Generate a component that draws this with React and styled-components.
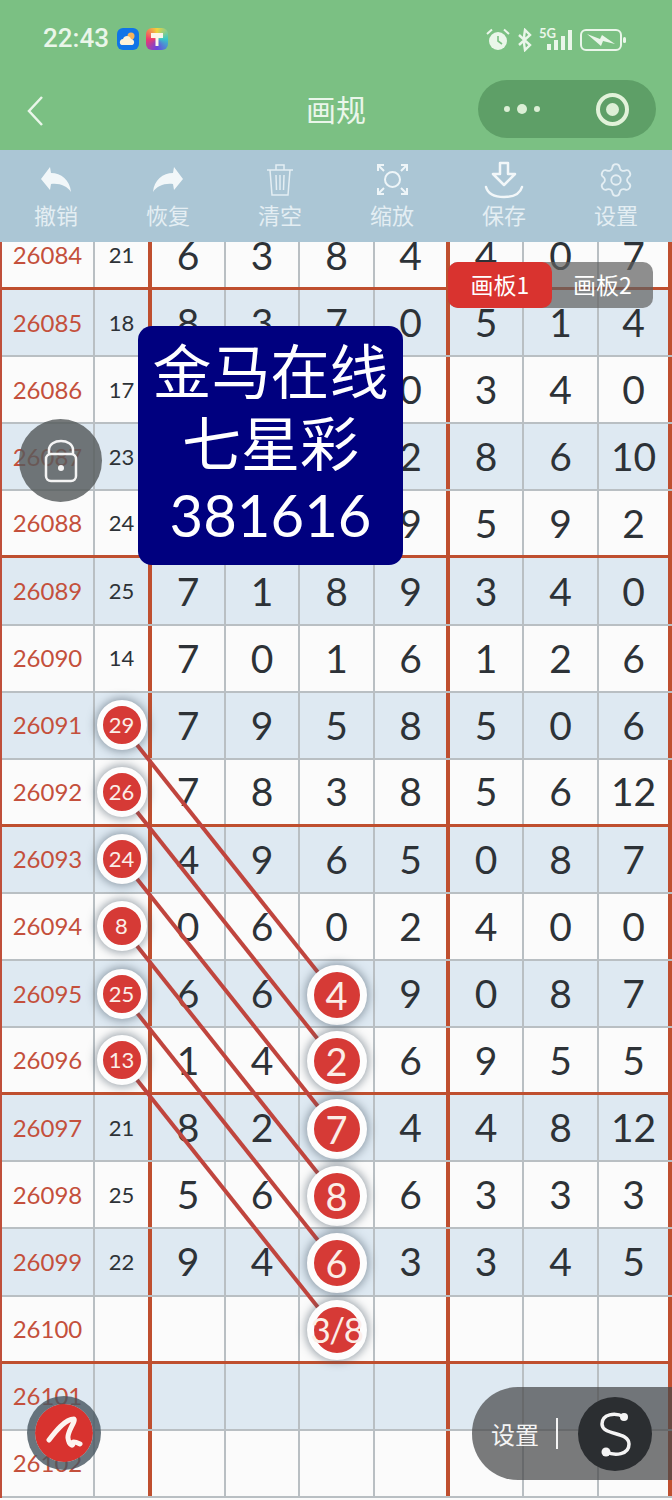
import React from 'react';
import styled, { createGlobalStyle } from 'styled-components';
import { Settings } from 'lucide-react';

const CJK = '"Noto Sans CJK SC", "Noto Sans", sans-serif';
const NUM = 'Lato, "Noto Sans CJK SC", sans-serif';

const Global = createGlobalStyle`
  html, body { margin: 0; padding: 0; background: #fbfbfb; }
  * { box-sizing: border-box; }
`;

const Page = styled.div`
  position: relative;
  width: 672px;
  height: 1500px;
  overflow: hidden;
  display: flex;
  flex-direction: column;
  font-family: ${CJK};
`;

const Head = styled.header`
  height: 150px;
  background: #7bc083;
  flex: none;
  color: #eaf6ea;
`;

const StatusBar = styled.div`
  height: 76px;
  padding: 26px 46px 0 43px;
  display: flex;
  align-items: flex-start;
`;

const Time = styled.span`
  font: 500 26px/24px Roboto, sans-serif;
  margin-right: 8px;
`;

const AppIcon = styled.span`
  width: 22px;
  height: 22px;
  border-radius: 6px;
  margin-right: 7px;
  margin-top: 2px;
  display: flex;
  align-items: center;
  justify-content: center;
  background: ${p => p.$bg};
`;

const StatusRight = styled.div`
  margin-left: auto;
  display: flex;
  align-items: center;
  height: 28px;
`;

const StatusGlyph = styled.svg`
  margin-left: ${p => p.$gap || 0}px;
`;

const FiveG = styled.span`
  font: 700 13px/12px Lato, sans-serif;
  margin: -14px -12px 0 7px;
  width: 18px;
`;

const Nav = styled.div`
  height: 74px;
  position: relative;
  display: flex;
  align-items: center;
  justify-content: center;
  padding-bottom: 10px;
`;

const BackIcon = styled.svg`
  position: absolute;
  left: 26px;
  top: 19px;
`;

const Title = styled.div`
  font-size: 30px;
  line-height: 40px;
`;

const Capsule = styled.div`
  position: absolute;
  left: 478px;
  top: 4px;
  width: 178px;
  height: 58px;
  border-radius: 29px;
  background: #5e9f67;
  display: flex;
  align-items: center;
  padding-left: 26px;
`;

const Dot = styled.span`
  width: ${p => p.$size}px;
  height: ${p => p.$size}px;
  border-radius: 50%;
  background: #dcefd6;
  margin-right: 7px;
`;

const Target = styled.span`
  position: absolute;
  left: 118px;
  top: 13px;
  width: 33px;
  height: 33px;
  border-radius: 50%;
  border: 4px solid #e2f2da;
  display: flex;
  align-items: center;
  justify-content: center;
  &::after {
    content: '';
    width: 13px;
    height: 13px;
    border-radius: 50%;
    background: #dcefd6;
  }
`;

const Toolbar = styled.nav`
  height: 92px;
  flex: none;
  background: #abc6d5;
  display: grid;
  grid-template-columns: repeat(6, 112px);
`;

const Tool = styled.div`
  display: flex;
  flex-direction: column;
  align-items: center;
  color: #e4eef3;
`;

const ToolIcon = styled.div`
  height: 51px;
  display: flex;
  align-items: center;
  justify-content: center;
  padding-top: 8px;
`;

const ToolLabel = styled.span`
  font-size: 22px;
  line-height: 26px;
`;

const Sheet = styled.main`
  flex: 1;
  overflow: hidden;
`;

const Rows = styled.div`
  margin-top: -19px;
  border-left: 2px solid #bf4f3a;
`;

const Row = styled.div`
  display: grid;
  grid-template-columns: 93px 57px 74px 74px 75px 75px 74px 75px 73px;
  height: 67.1px;
  background: ${p => (p.$blue ? '#dee9f2' : '#fbfbfb')};
  border-bottom: ${p => (p.$thick ? '3px solid #bf4f2f' : '2px solid #b9bfc3')};
`;

const Cell = styled.div`
  display: flex;
  align-items: center;
  justify-content: center;
  border-right: ${p => (p.$thick ? '4px solid #bf4f2f' : '2px solid #b9bfc3')};
  color: #2d3237;
  font: 400 39px/1 ${NUM};
`;

const IdCell = styled(Cell)`
  color: #c4503c;
  font-size: 24px;
`;

const CountCell = styled(Cell)`
  font-size: 22px;
`;

const Ball = styled.span`
  position: relative;
  z-index: 2;
  flex: none;
  display: flex;
  align-items: center;
  justify-content: center;
  width: ${p => (p.$big ? 60 : 50)}px;
  height: ${p => (p.$big ? 60 : 50)}px;
  margin-top: ${p => (p.$big ? 2 : 0)}px;
  border-radius: 50%;
  background: #d63a36;
  border: ${p => (p.$big ? 7 : 6)}px solid #fdfdfd;
  box-shadow: 0 0 8px 2px rgba(70, 85, 100, 0.5);
  color: #fbeee8;
  font-size: ${p => (p.$big ? 38 : 22)}px;
  white-space: nowrap;
`;

// "3/8" has to stay inside the red part
const Fraction = styled.span`
  font-size: 35px;
  letter-spacing: -1.5px;
`;

const Lines = styled.svg`
  position: absolute;
  left: 0;
  top: 0;
  z-index: 1;
  pointer-events: none;
`;

const Notice = styled.div`
  position: absolute;
  z-index: 3;
  left: 138px;
  top: 326px;
  width: 265px;
  height: 239px;
  border-radius: 14px;
  background: #00007f;
  color: #fff;
  text-align: center;
  font-size: 59px;
  line-height: 72px;
  padding-top: 7px;
`;

const NoticeNum = styled.div`
  font-family: ${NUM};
  font-size: 58px;
  margin-top: 2px;
`;

const Tabs = styled.div`
  position: absolute;
  z-index: 3;
  left: 448px;
  top: 262px;
  width: 205px;
  height: 46px;
  display: flex;
  border-radius: 10px;
  background: rgba(95, 95, 95, 0.7);
`;

const Tab = styled.div`
  width: ${p => (p.$on ? 104 : 101)}px;
  border-radius: 10px;
  background: ${p => (p.$on ? '#d9332f' : 'transparent')};
  color: #fff;
  font-size: 23px;
  line-height: 44px;
  text-align: center;
`;

const LockButton = styled.div`
  position: absolute;
  z-index: 3;
  left: 19px;
  top: 419px;
  width: 83px;
  height: 83px;
  border-radius: 50%;
  background: rgba(85, 90, 92, 0.82);
  display: flex;
  align-items: center;
  justify-content: center;
`;

const PenButton = styled.div`
  position: absolute;
  z-index: 3;
  left: 27px;
  top: 1396px;
  width: 74px;
  height: 74px;
  border-radius: 50%;
  background: #d8332f;
  border: 8px solid rgba(70, 85, 95, 0.8);
  background-clip: padding-box;
  display: flex;
  align-items: center;
  justify-content: center;
`;

const Dock = styled.div`
  position: absolute;
  z-index: 3;
  left: 472px;
  top: 1387px;
  width: 200px;
  height: 93px;
  border-radius: 46px 0 0 46px;
  background: rgba(70, 72, 74, 0.72);
  display: flex;
  align-items: center;
  padding-left: 19px;
  color: #f4f4f4;
  font-size: 24px;
`;

const DockRule = styled.span`
  width: 2px;
  height: 31px;
  margin-left: 17px;
  background: #f4f4f4;
`;

const DockKnob = styled.span`
  margin-left: 20px;
  width: 74px;
  height: 74px;
  border-radius: 50%;
  background: #2b2e31;
  display: flex;
  align-items: center;
  justify-content: center;
`;

const tools = [
  ['撤销', <svg key="a" width="32" height="27" viewBox="0 0 32 27"><path d="M1 13 L10 1 L11 7 C21 7 30 14 31 26 C27 20 20 17 11 18 L10 24 Z" fill="#f2f7f9" /></svg>],
  ['恢复', <svg key="b" width="32" height="27" viewBox="0 0 32 27"><path d="M31 13 L22 1 L21 7 C11 7 2 14 1 26 C5 20 12 17 21 18 L22 24 Z" fill="#f2f7f9" /></svg>],
  ['清空', <svg key="c" width="28" height="34" viewBox="0 0 28 34" fill="none" stroke="#e4eef3" strokeWidth="1.5"><path d="M1 7 H27 M10 7 V2 H18 V7 M4 7 L6 32 H22 L24 7 M10 12 L10.5 27 M14 12 V27 M18 12 L17.5 27" /></svg>],
  ['缩放', <svg key="d" width="33" height="33" viewBox="0 0 33 33" fill="none" stroke="#eef5f8" strokeWidth="2"><circle cx="16.5" cy="16.5" r="7.5" /><path d="M2 8 V2 H8 M2 2 L8 8 M31 8 V2 H25 M31 2 L25 8 M2 25 V31 H8 M2 31 L8 25 M31 25 V31 H25 M31 31 L25 25" /></svg>],
  ['保存', <svg key="e" width="40" height="38" viewBox="0 0 40 38" fill="none" stroke="#f2f7f9" strokeWidth="2.5" strokeLinejoin="round" strokeLinecap="round"><path d="M16 2 H24 V13 H31 L20 24 L9 13 H16 Z" /><path d="M2 26 C4 33 11 36 20 36 C29 36 36 33 38 26" /></svg>],
  ['设置', <Settings key="f" size={38} strokeWidth={1.15} color="#e4eef3" />],
];

const rows = [
  ['26084', '21', '6', '3', '8', '4', '4', '0', '7'],
  ['26085', '18', '8', '3', '7', '0', '5', '1', '4'],
  ['26086', '17', '', '', '', '0', '3', '4', '0'],
  ['26087', '23', '', '', '', '2', '8', '6', '10'],
  ['26088', '24', '', '', '', '9', '5', '9', '2'],
  ['26089', '25', '7', '1', '8', '9', '3', '4', '0'],
  ['26090', '14', '7', '0', '1', '6', '1', '2', '6'],
  ['26091', '29', '7', '9', '5', '8', '5', '0', '6'],
  ['26092', '26', '7', '8', '3', '8', '5', '6', '12'],
  ['26093', '24', '4', '9', '6', '5', '0', '8', '7'],
  ['26094', '8', '0', '6', '0', '2', '4', '0', '0'],
  ['26095', '25', '6', '6', '4', '9', '0', '8', '7'],
  ['26096', '13', '1', '4', '2', '6', '9', '5', '5'],
  ['26097', '21', '8', '2', '7', '4', '4', '8', '12'],
  ['26098', '25', '5', '6', '8', '6', '3', '3', '3'],
  ['26099', '22', '9', '4', '6', '3', '3', '4', '5'],
  ['26100', '', '', '', '3/8', '', '', '', ''],
  ['26101', '', '', '', '', '', '', '', ''],
  ['26102', '', '', '', '', '', '', '', ''],
];

// rows whose count / third column sit in a ball
const smallBalls = new Set(['26091', '26092', '26093', '26094', '26095', '26096']);
const bigBalls = new Set(['26095', '26096', '26097', '26098', '26099', '26100']);

const links = [726, 793, 860, 927, 994, 1061];

const App = () => (
  <Page>
    <Global />
    <Head>
      <StatusBar>
        <Time>22:43</Time>
        <AppIcon $bg="#0f74e8">
          <svg width="18" height="14" viewBox="0 0 18 14">
            <circle cx="12" cy="4" r="3.5" fill="#f5b35a" />
            <path d="M3 13 C0 13 0 7 4 7 C5 3 11 3 12 7 C16 7 16 13 13 13 Z" fill="#fdf2d8" />
          </svg>
        </AppIcon>
        <AppIcon $bg="conic-gradient(from 0deg, #f2d43a, #37c8c8 25%, #6a45e0 50%, #f03a6c 75%, #f2d43a)">
          <svg width="14" height="16" viewBox="0 0 14 16"><path d="M1 2 H13 V7 H8.5 V15 H5.5 V7 H1 Z" fill="#fdf6ea" /></svg>
        </AppIcon>
        <StatusRight>
          <StatusGlyph width="24" height="24" viewBox="0 0 24 24" fill="#eaf6ea">
            <circle cx="12" cy="13" r="9" />
            <path d="M1 6 L6 1.5 M23 6 L18 1.5" stroke="#eaf6ea" strokeWidth="2" />
            <path d="M12 8 V13 L16 16" stroke="#7bc083" strokeWidth="1.6" fill="none" />
          </StatusGlyph>
          <StatusGlyph $gap={7} width="15" height="24" viewBox="0 0 15 24" fill="none" stroke="#eaf6ea" strokeWidth="2.4">
            <path d="M2 7 L13 17 L8 22 Q6 12 8 2 L13 7 L2 17" />
          </StatusGlyph>
          <FiveG>5G</FiveG>
          <StatusGlyph $gap={1} width="28" height="24" viewBox="0 0 28 24" fill="#eaf6ea">
            <rect x="1" y="16" width="4" height="6" />
            <rect x="8" y="12" width="4" height="10" />
            <rect x="15" y="8" width="4" height="14" />
            <rect x="22" y="2" width="4" height="20" />
          </StatusGlyph>
          <StatusGlyph $gap={6} width="46" height="24" viewBox="0 0 46 24" fill="none">
            <rect x="1" y="2" width="40" height="20" rx="5" stroke="#eaf6ea" strokeWidth="2" />
            <rect x="43" y="9" width="3" height="6" rx="1.5" fill="#eaf6ea" />
            <path d="M7 6 L20 11 L22 7 L35 16 L23 13 L21 18 Z" fill="#eaf6ea" />
          </StatusGlyph>
        </StatusRight>
      </StatusBar>
      <Nav>
        <BackIcon width="20" height="32" viewBox="0 0 20 32" fill="none" stroke="#eaf6ea" strokeWidth="2.5">
          <path d="M16 2 L3 16 L16 30" />
        </BackIcon>
        <Title>画规</Title>
        <Capsule>
          <Dot $size={6} />
          <Dot $size={10} />
          <Dot $size={6} />
          <Target />
        </Capsule>
      </Nav>
    </Head>

    <Toolbar>
      {tools.map(([label, icon]) => (
        <Tool key={label}>
          <ToolIcon>{icon}</ToolIcon>
          <ToolLabel>{label}</ToolLabel>
        </Tool>
      ))}
    </Toolbar>

    <Sheet>
      <Rows>
        {rows.map((r, i) => (
          <Row key={r[0]} $blue={i % 2 === 1} $thick={i % 4 === 0}>
            <IdCell>{r[0]}</IdCell>
            <CountCell $thick>
              {smallBalls.has(r[0]) ? <Ball>{r[1]}</Ball> : r[1]}
            </CountCell>
            <Cell>{r[2]}</Cell>
            <Cell>{r[3]}</Cell>
            <Cell>
              {bigBalls.has(r[0]) ? (
                <Ball $big>{r[4].includes('/') ? <Fraction>{r[4]}</Fraction> : r[4]}</Ball>
              ) : r[4]}
            </Cell>
            <Cell $thick>{r[5]}</Cell>
            <Cell>{r[6]}</Cell>
            <Cell>{r[7]}</Cell>
            <Cell $thick>{r[8]}</Cell>
          </Row>
        ))}
      </Rows>
    </Sheet>

    <Lines width="672" height="1500" viewBox="0 0 672 1500">
      {links.map(y => (
        <line key={y} x1="122" y1={y} x2="336" y2={y + 269} stroke="#c0453e" strokeWidth="4" />
      ))}
    </Lines>

    <Notice>
      <div>金马在线</div>
      <div>七星彩</div>
      <NoticeNum>381616</NoticeNum>
    </Notice>

    <Tabs>
      <Tab $on>画板1</Tab>
      <Tab>画板2</Tab>
    </Tabs>

    <LockButton>
      <svg width="34" height="44" viewBox="0 0 34 44" fill="none" stroke="#f4f4f4" strokeWidth="2.5">
        <path d="M5 15 V11 C5 -1 29 -1 29 11 V15" />
        <rect x="2" y="15" width="30" height="27" rx="5" />
        <circle cx="17" cy="29" r="3" fill="#f4f4f4" stroke="none" />
      </svg>
    </LockButton>

    <PenButton>
      <svg width="38" height="38" viewBox="0 0 38 38" fill="none" stroke="#fdf4f0" strokeWidth="5" strokeLinecap="round" strokeLinejoin="round">
        <path d="M4 26 C10 18 20 5 29 5 C31 7 22 18 23 24 C24 32 29 33 28 28 C29 27 33 29 35 30" />
      </svg>
    </PenButton>

    <Dock>
      设置
      <DockRule />
      <DockKnob>
        <svg width="44" height="56" viewBox="0 0 44 56" fill="none" stroke="#f4f4f4" strokeWidth="3.5">
          <path d="M31 11 C22 6 9 8 9 18 C9 30 36 25 36 38 C36 49 22 50 13 46" />
          <circle cx="31" cy="11" r="4" fill="#f4f4f4" stroke="none" />
          <circle cx="13" cy="46" r="4.5" fill="#f4f4f4" stroke="none" />
        </svg>
      </DockKnob>
    </Dock>
  </Page>
);

export default App;
